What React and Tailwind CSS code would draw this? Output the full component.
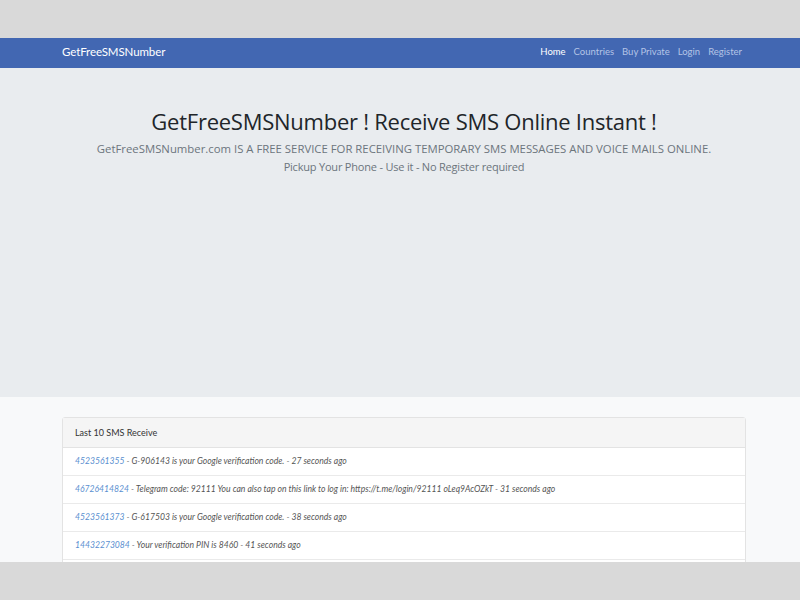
import React from 'react'

const navItems = [
  { label: 'Home', active: true },
  { label: 'Countries' },
  { label: 'Buy Private' },
  { label: 'Login' },
  { label: 'Register' },
]

const messages = [
  { num: '4523561355', text: 'G-906143 is your Google verification code. - 27 seconds ago' },
  { num: '46726414824', text: 'Telegram code: 92111 You can also tap on this link to log in: https://t.me/login/92111 oLeq9AcOZkT - 31 seconds ago' },
  { num: '4523561373', text: 'G-617503 is your Google verification code. - 38 seconds ago' },
  { num: '14432273084', text: 'Your verification PIN is 8460 - 41 seconds ago' },
]

export default function App() {
  return (
    <div className="w-[800px] h-[600px] overflow-hidden bg-[#d9d9d9] pt-[38px] font-['Lato','Open_Sans',sans-serif]">
      <div className="h-[524px] overflow-hidden bg-[#f8f9fa]">
        {/* Navbar */}
        <nav className="h-[30px] bg-[#4267b2] flex items-center justify-between pl-[62px] pr-[58px]">
          <span className="text-white text-[11.5px] tracking-[-0.1px] -mt-[2px]">GetFreeSMSNumber</span>
          <ul className="flex gap-[8px] text-[9.5px] -mt-[2px]">
            {navItems.map((item) => (
              <li key={item.label} className={item.active ? 'text-white' : 'text-[#b4c4e6]'}>
                {item.label}
              </li>
            ))}
          </ul>
        </nav>

        {/* Hero */}
        <div className="h-[329px] bg-[#e9ecef] flex flex-col items-center pt-[38px] pl-[8px]">
          <h1 className="text-[22px] text-[#212529] leading-[30px] font-['Open_Sans',sans-serif] tracking-[-0.25px]">
            GetFreeSMSNumber ! Receive SMS Online Instant !
          </h1>
          <p className="mt-[6px] text-[11.35px] text-[#6c757d] leading-[14px] font-['Open_Sans',sans-serif]">
            GetFreeSMSNumber.com IS A FREE SERVICE FOR RECEIVING TEMPORARY SMS MESSAGES AND VOICE MAILS ONLINE.
          </p>
          <p className="mt-[4px] text-[11px] text-[#6c757d] leading-[14px] font-['Open_Sans',sans-serif] tracking-[-0.2px]">
            Pickup Your Phone - Use it - No Register required
          </p>
        </div>

        {/* Card */}
        <div className="pt-[20px] px-[62px] pr-[54px]">
          <div className="bg-white border border-[#e3e3e3] rounded-[3px] pb-[20px]">
            <div className="h-[30px] bg-[#f5f5f5] border-b border-[#e3e3e3] flex items-center px-[12px] text-[9px] text-[#333]">
              Last 10 SMS Receive
            </div>
            {messages.map((m, i) => (
              <div key={i} className="h-[28px] border-b border-[#eaeaea] flex items-center px-[12px] text-[8.6px] italic text-[#555] whitespace-nowrap">
                <span className="text-[#5a8fd0]">{m.num}</span>
                <span>&nbsp;- {m.text}</span>
              </div>
            ))}
          </div>
        </div>
      </div>
    </div>
  )
}
